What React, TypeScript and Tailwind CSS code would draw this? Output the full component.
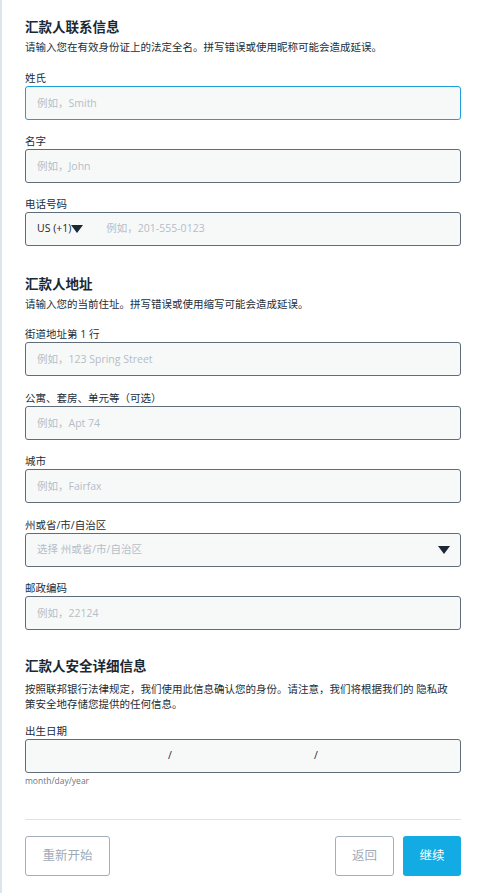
import React from "react";

const inputCls =
  "block w-full h-[34px] rounded-[3px] border border-[#5f6d7b] bg-[#f7f9f9] px-[11px] text-[10.5px] text-[#1b2733] outline-none placeholder:text-[#b5bdc7]";

function Field({
  label,
  placeholder,
  focused,
}: {
  label: string;
  placeholder: string;
  focused?: boolean;
}) {
  return (
    <div>
      <label className="block text-[10.5px] leading-[16px] text-[#222d38]">{label}</label>
      <input
        className={
          focused
            ? "block w-full h-[34px] rounded-[3px] border border-[#1d9fda] bg-[#f7f9f9] px-[11px] text-[10.5px] text-[#1b2733] outline-none placeholder:text-[#b5bdc7]"
            : inputCls
        }
        placeholder={placeholder}
      />
    </div>
  );
}

function Caret() {
  return (
    <svg width="12" height="8" viewBox="0 0 12 8">
      <path d="M0 0h12L6 8z" fill="#1b2733" />
    </svg>
  );
}

function Section({
  title,
  desc,
  children,
  descCls = "mt-[4px]",
}: {
  title: string;
  desc: React.ReactNode;
  children: React.ReactNode;
  descCls?: string;
}) {
  return (
    <section>
      <h2 className="text-[13.5px] leading-[18px] font-bold text-[#1b2733]">{title}</h2>
      <p className={`${descCls} text-[10.5px] leading-[15px] text-[#222d38]`}>{desc}</p>
      {children}
    </section>
  );
}

export default function App() {
  return (
    <div className="w-[479px] min-h-[893px] bg-white border-l-2 border-[#dde4ec] font-['Open_Sans','Noto_Sans_CJK_SC',sans-serif]">
      <div className="pl-[23px] pr-[18px] pt-[18px] pb-[18px]">
        <Section
          title="汇款人联系信息"
          desc="请输入您在有效身份证上的法定全名。拼写错误或使用昵称可能会造成延误。"
        >
          <div className="mt-[15px] flex flex-col gap-[13px]">
            <Field label="姓氏" placeholder="例如，Smith" focused />
            <Field label="名字" placeholder="例如，John" />
            <div>
              <label className="block text-[10.5px] leading-[16px] text-[#222d38]">电话号码</label>
              <div className="flex h-[34px] items-center rounded-[3px] border border-[#5f6d7b] bg-[#f7f9f9] pl-[11px]">
                <span className="text-[10.5px] text-[#1b2733]">US (+1)</span>
                <Caret />
                <input
                  className="ml-[23px] flex-1 bg-transparent text-[10.5px] outline-none placeholder:text-[#b5bdc7]"
                  placeholder="例如，201-555-0123"
                />
              </div>
            </div>
          </div>
        </Section>

        <div className="mt-[29px]">
          <Section
            title="汇款人地址"
            desc="请输入您的当前住址。拼写错误或使用缩写可能会造成延误。"
          >
            <div className="mt-[14px] flex flex-col gap-[13.5px]">
              <Field label="街道地址第 1 行" placeholder="例如，123 Spring Street" />
              <Field label="公寓、套房、单元等（可选）" placeholder="例如，Apt 74" />
              <Field label="城市" placeholder="例如，Fairfax" />
              <div>
                <label className="block text-[10.5px] leading-[16px] text-[#222d38]">州或省/市/自治区</label>
                <div className="flex h-[34px] items-center justify-between rounded-[3px] border border-[#5f6d7b] bg-[#f7f9f9] pl-[11px] pr-[10px]">
                  <span className="text-[10.5px] text-[#b5bdc7]">选择 州或省/市/自治区</span>
                  <Caret />
                </div>
              </div>
              <Field label="邮政编码" placeholder="例如，22124" />
            </div>
          </Section>
        </div>

        <div className="mt-[27px]">
          <Section
            title="汇款人安全详细信息"
            descCls="mt-[7px] max-w-[428px]"
            desc="按照联邦银行法律规定，我们使用此信息确认您的身份。请注意，我们将根据我们的 隐私政策安全地存储您提供的任何信息。"
          >
            <div className="mt-[11px]">
              <label className="block text-[10.5px] leading-[16px] text-[#222d38]">出生日期</label>
              <div className="flex h-[34px] items-center rounded-[3px] border border-[#5f6d7b] bg-[#f7f9f9] text-[10.5px] text-[#1b2733]">
                <span className="flex-1" />
                <span>/</span>
                <span className="flex-1" />
                <span>/</span>
                <span className="flex-1" />
              </div>
              <p className="mt-[2px] text-[8.5px] leading-[12px] text-[#6b7682]">month/day/year</p>
            </div>
          </Section>
        </div>

        <div className="mt-[32px] h-px bg-[#dde3ea]" />

        <div className="mt-[16px] flex items-center">
          <button className="h-[40px] w-[85px] rounded-[3px] border border-[#a2aebb] text-[12.5px] text-[#a0abb8]">
            重新开始
          </button>
          <div className="ml-auto flex gap-[9px]">
            <button className="h-[40px] w-[59px] rounded-[3px] border border-[#a2aebb] text-[12.5px] text-[#a0abb8]">
              返回
            </button>
            <button className="h-[40px] w-[58px] rounded-[3px] bg-[#13abe3] text-[12.5px] text-white">
              继续
            </button>
          </div>
        </div>
      </div>
    </div>
  );
}
